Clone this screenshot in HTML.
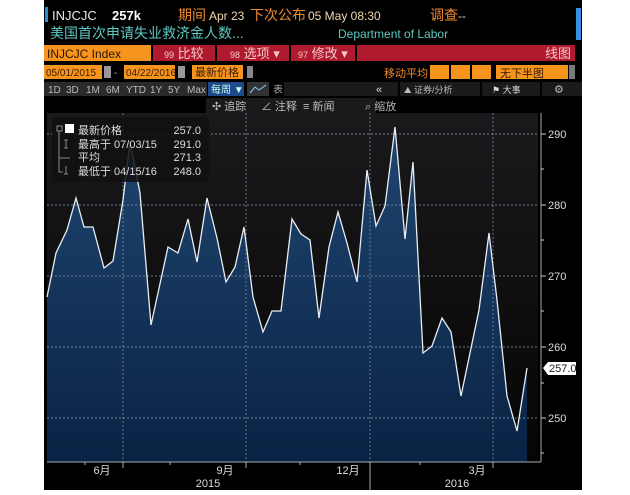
<!DOCTYPE html>
<html><head><meta charset="utf-8"><style>
body{margin:0;background:#fff;width:630px;height:490px;overflow:hidden;font-family:"Liberation Sans","Noto Sans CJK SC",sans-serif;}
svg text{font-family:"Liberation Sans","Noto Sans CJK SC",sans-serif;}
</style></head><body>
<svg width="630" height="490" viewBox="0 0 630 490" xmlns="http://www.w3.org/2000/svg">
<defs>
<linearGradient id="g" x1="0" y1="0" x2="0" y2="1"><stop offset="0" stop-color="#1f4670"/><stop offset="1" stop-color="#0a2244"/></linearGradient>
<linearGradient id="bg" x1="0" y1="0" x2="0" y2="1"><stop offset="0" stop-color="#1a1a1c"/><stop offset="1" stop-color="#050505"/></linearGradient>
</defs>
<rect x="44" y="0" width="538" height="490" fill="#000"/>
<rect x="45" y="7" width="3" height="15" fill="#2a8fd0"/>
<rect x="576" y="8" width="5" height="32" fill="#3a90e0"/>
<text x="52" y="20" font-size="13" fill="#e8e8e8" font-family="Liberation Mono">INJCJC</text>
<text x="112" y="20" font-size="13" font-weight="bold" fill="#fff">257k</text>
<text x="178" y="20" font-size="14" fill="#f08a2c">期间</text>
<text x="209" y="20" font-size="12" fill="#f0d8b0">Apr 23</text>
<text x="250" y="20" font-size="14" fill="#f08a2c">下次公布</text>
<text x="308" y="20" font-size="12" fill="#f0d8b0">05 May 08:30</text>
<text x="430" y="20" font-size="14" fill="#f08a2c">调查</text>
<text x="458" y="20" font-size="12" fill="#f0d8b0">--</text>
<text x="50" y="38" font-size="14" fill="#5ec8c0">美国首次申请失业救济金人数...</text>
<text x="338" y="38" font-size="12" fill="#5ec8c0" font-family="Liberation Mono">Department of Labor</text>
<rect x="44" y="45" width="107" height="16" fill="#f7941d"/>
<text x="47" y="58" font-size="12" fill="#2a1400" font-family="Liberation Mono">INJCJC Index</text>
<rect x="151" y="45" width="424" height="16" fill="#b01a2e"/>
<g fill="#000"><rect x="151" y="45" width="2" height="16"/><rect x="215" y="45" width="2" height="16"/><rect x="289" y="45" width="2" height="16"/><rect x="355" y="45" width="2" height="16"/></g>
<g font-size="13" fill="#f4c8c8"><text x="164" y="58"><tspan font-size="9">99</tspan> 比较</text><text x="230" y="58"><tspan font-size="9">98</tspan> 选项 ▾</text><text x="298" y="58"><tspan font-size="9">97</tspan> 修改 ▾</text><text x="545" y="58">线图</text></g>
<rect x="44" y="65" width="58" height="14" fill="#f7941d"/><text x="46" y="76" font-size="10" fill="#3a1a00">05/01/2015</text>
<rect x="104" y="66" width="7" height="12" fill="#999"/><text x="114" y="76" font-size="10" fill="#bbb">-</text>
<rect x="124" y="65" width="51" height="14" fill="#f7941d"/><text x="126" y="76" font-size="10" fill="#3a1a00">04/22/2016</text>
<rect x="178" y="66" width="7" height="12" fill="#999"/>
<rect x="192" y="65" width="51" height="14" fill="#f7941d"/><text x="195" y="76" font-size="11" fill="#3a1a00">最新价格</text>
<rect x="247" y="66" width="6" height="12" fill="#888"/>
<text x="384" y="77" font-size="11" fill="#f08a2c">移动平均</text>
<rect x="430" y="65" width="19" height="14" fill="#f7941d"/><rect x="451" y="65" width="19" height="14" fill="#f7941d"/><rect x="472" y="65" width="19" height="14" fill="#f7941d"/>
<rect x="496" y="65" width="72" height="14" fill="#f7941d"/><text x="500" y="77" font-size="11" fill="#3a1a00">无下半图</text>
<rect x="569" y="65" width="6" height="14" fill="#777"/>
<g font-size="10" fill="#bbb"><rect x="44" y="82" width="163" height="14" fill="#2a2a2a"/>
<text x="48" y="93">1D</text><text x="66" y="93">3D</text><text x="86" y="93">1M</text><text x="106" y="93">6M</text><text x="126" y="93">YTD</text><text x="150" y="93">1Y</text><text x="168" y="93">5Y</text><text x="187" y="93">Max</text></g>
<rect x="208" y="82" width="36" height="14" fill="#1c4a8a"/><text x="211" y="93" font-size="10" fill="#cfe">每周 ▼</text>
<rect x="247" y="82" width="22" height="14" fill="#333"/><path d="M250 93 L255 87 L259 90 L266 85" stroke="#8cf" fill="none"/>
<text x="273" y="93" font-size="10" fill="#aaa">表</text>
<rect x="284" y="82" width="298" height="14" fill="#1a1a1a"/>
<g fill="#000"><rect x="398" y="82" width="2" height="14"/><rect x="480" y="82" width="2" height="14"/><rect x="540" y="82" width="2" height="14"/></g>
<text x="376" y="93" font-size="11" fill="#ddd">«</text>
<text x="404" y="93" font-size="9" fill="#bbb">⛰ 证券/分析</text>
<text x="492" y="93" font-size="9" fill="#ddd">⚑ 大事</text>
<text x="554" y="93" font-size="11" fill="#bbb">⚙</text>
<rect x="206" y="98" width="170" height="15" fill="#1a1a1a"/>
<g font-size="11" fill="#bbb"><text x="212" y="110">✣ 追踪</text><text x="261" y="110">∠ 注释</text><text x="303" y="110">≡ 新闻</text><text x="365" y="110">⌕ 缩放</text></g>
<rect x="47" y="113" width="491" height="349" fill="url(#bg)"/>
<path d="M47,462 L47,297 56,253 67,230 76,198 84,227 93,227 104,268 113,261 123,200 130,142 140,193 151,325 168,247 178,253 188,219 197,262 207,198 217,238 226,282 235,267 244,227 253,297 263,332 272,311 281,311 292,219 301,234 310,240 319,318 329,247 338,212 347,243 357,282 367,170 376,226 385,206 395,127 405,239 413,162 423,353 432,346 442,318 451,332 461,396 479,310 489,233 497,300 507,396 517,431 527,368 527,462 Z" fill="url(#g)"/>
<g stroke="#8a9aaa" stroke-width="0.7" stroke-dasharray="2,2" fill="none">
<path d="M47 134H538M47 205H538M47 276H538M47 347H538M47 418H538"/>
<path d="M123 113V462M246 113V462M370 113V462M493 113V462"/>
</g>
<polyline fill="none" stroke="#e8eef4" stroke-width="1.3" points="47,297 56,253 67,230 76,198 84,227 93,227 104,268 113,261 123,200 130,142 140,193 151,325 168,247 178,253 188,219 197,262 207,198 217,238 226,282 235,267 244,227 253,297 263,332 272,311 281,311 292,219 301,234 310,240 319,318 329,247 338,212 347,243 357,282 367,170 376,226 385,206 395,127 405,239 413,162 423,353 432,346 442,318 451,332 461,396 479,310 489,233 497,300 507,396 517,431 527,368"/>
<rect x="52" y="117" width="157" height="65" fill="#111" opacity="0.85"/>
<rect x="57" y="126" width="5" height="5" fill="none" stroke="#aaa" stroke-width="0.8"/>
<rect x="65" y="124" width="9" height="9" fill="#fff"/>
<g font-size="11" fill="#ddd"><text x="78" y="134">最新价格</text><text x="78" y="148">最高于 07/03/15</text><text x="78" y="161">平均</text><text x="78" y="175">最低于 04/15/16</text>
<text x="201" y="134" text-anchor="end">257.0</text><text x="201" y="148" text-anchor="end">291.0</text><text x="201" y="161" text-anchor="end">271.3</text><text x="201" y="175" text-anchor="end">248.0</text></g>
<path d="M59 131V172H63M59 158H70M66 140V148M64 140H68M64 148H68M66 166V174M64 174H68" stroke="#aaa" fill="none" stroke-width="0.8"/>
<path d="M541 113V462M47 462H541" stroke="#aaa" fill="none"/>
<g stroke="#ccc"><path d="M541 134H546M541 205H546M541 276H546M541 347H546M541 418H546M541 169H544M541 240H544M541 311H544M541 383H544M541 453H544"/></g>
<g font-size="11" fill="#ddd"><text x="548" y="138">290</text><text x="548" y="209">280</text><text x="548" y="280">270</text><text x="548" y="351">260</text><text x="548" y="422">250</text></g>
<path d="M543 368 L548 362 H576 V375 H548 Z" fill="#fff"/><text x="549" y="372" font-size="11" fill="#222">257.0</text>
<g stroke="#aaa"><path d="M123 462V468M246 462V468M370 462V468M493 462V468M85 462V465M170 462V465M300 462V465M420 462V465"/><path d="M370 466V490"/></g>
<g font-size="11" fill="#ddd" text-anchor="middle"><text x="102" y="474">6月</text><text x="225" y="474">9月</text><text x="348" y="474">12月</text><text x="477" y="474">3月</text><text x="208" y="487">2015</text><text x="457" y="487">2016</text></g>
</svg>
</body></html>
